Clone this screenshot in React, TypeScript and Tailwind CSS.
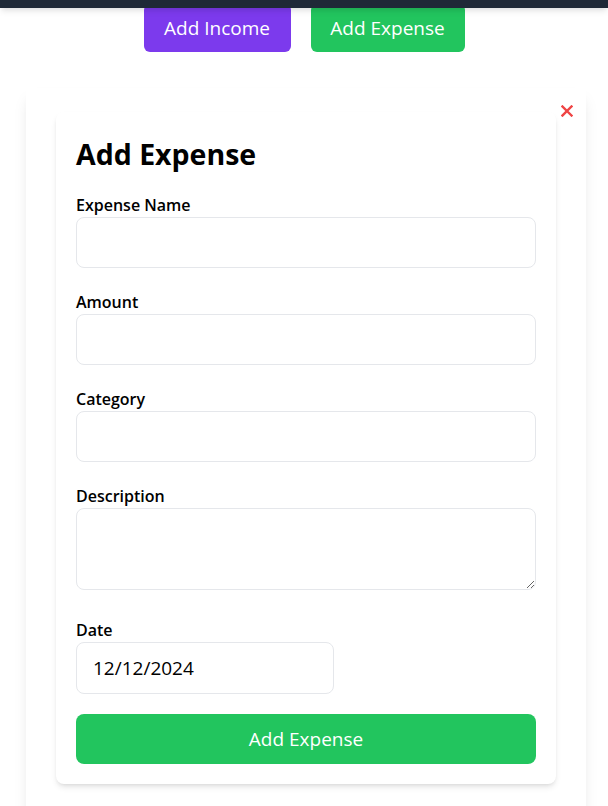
import React, { useState } from "react";

const fieldClass =
  "block w-full h-[51px] rounded-lg border border-[#e5e7eb] bg-white px-4 text-[19px] text-black outline-none";

function Field({ label, children }: { label: string; children: React.ReactNode }) {
  return (
    <div className="mb-[22px]">
      <label className="block text-base font-semibold leading-6 text-black">{label}</label>
      {children}
    </div>
  );
}

function CloseIcon() {
  return (
    <svg width="12" height="12" viewBox="0 0 12 12" fill="none">
      <path d="M1.5 1.5L10.5 10.5M10.5 1.5L1.5 10.5" stroke="#ef4444" strokeWidth="2.4" strokeLinecap="square" />
    </svg>
  );
}

export default function App() {
  const [name, setName] = useState("");
  const [amount, setAmount] = useState("");
  const [category, setCategory] = useState("");
  const [description, setDescription] = useState("");
  const [date, setDate] = useState("12/12/2024");

  return (
    <div
      className="min-h-screen bg-white"
      style={{ fontFamily: '"Segoe UI", "Open Sans", "Noto Sans", sans-serif' }}
    >
      <div className="relative z-10 h-2 bg-[#1f2937] shadow-md" />

      <div className="-mt-1 flex justify-center gap-5">
        <button className="h-12 w-[147px] rounded-md bg-[#7c3aed] text-[19px] text-white">Add Income</button>
        <button className="h-12 w-[154px] rounded-md bg-[#22c55e] text-[19px] text-white">Add Expense</button>
      </div>

      <div className="relative mx-auto mt-9 w-[560px] translate-x-[2px] bg-white px-[30px] pt-6 pb-10 shadow-lg">
        <button className="absolute top-[17px] right-[13px] p-0">
          <CloseIcon />
        </button>

        <form
          onSubmit={(e) => e.preventDefault()}
          className="rounded-lg bg-white px-5 pt-6 pb-5 shadow-md"
        >
          <h2 className="mb-[21px] text-[28.5px] font-bold leading-9 text-black">Add Expense</h2>

          <Field label="Expense Name">
            <input className={fieldClass} value={name} onChange={(e) => setName(e.target.value)} />
          </Field>
          <Field label="Amount">
            <input className={fieldClass} value={amount} onChange={(e) => setAmount(e.target.value)} />
          </Field>
          <Field label="Category">
            <input className={fieldClass} value={category} onChange={(e) => setCategory(e.target.value)} />
          </Field>

          <div className="mb-[28px]">
            <label className="block text-base font-semibold leading-6 text-black">Description</label>
            <textarea
              className="block h-[82px] w-full rounded-lg border border-[#e5e7eb] px-4 py-2 text-lg outline-none"
              value={description}
              onChange={(e) => setDescription(e.target.value)}
            />
          </div>

          <div className="mb-5">
            <label className="block text-base font-semibold leading-6 text-black">Date</label>
            <input
              className="block h-[52px] w-[258px] rounded-lg border border-[#e5e7eb] px-4 text-[19px] text-black outline-none"
              value={date}
              onChange={(e) => setDate(e.target.value)}
            />
          </div>

          <button type="submit" className="block h-[50px] w-full rounded-lg bg-[#22c55e] text-[19px] text-white">
            Add Expense
          </button>
        </form>
      </div>
    </div>
  );
}
